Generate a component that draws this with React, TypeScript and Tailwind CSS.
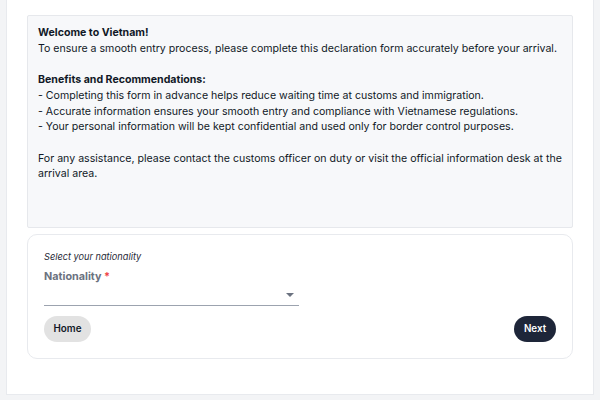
const bullets = [
  "- Completing this form in advance helps reduce waiting time at customs and immigration.",
  "- Accurate information ensures your smooth entry and compliance with Vietnamese regulations.",
  "- Your personal information will be kept confidential and used only for border control purposes.",
];

export default function App() {
  return (
    <div
      className="h-[400px] w-[600px] bg-[#f3f4f6] px-[6px] text-[#1f2937]"
      style={{ fontFamily: "Inter, 'Noto Sans', sans-serif" }}
    >
      <div className="h-[395px] border-x border-b border-[#e8eaee] bg-white px-5 pt-[15px]">
        <section className="h-[213px] rounded-[2px] border border-[#e6e8ec] bg-[#f7f8fa] px-[10px] pt-[9px] text-[10.6px] leading-[15.7px] text-[#111827]">
          <p className="font-bold">Welcome to Vietnam!</p>
          <p>
            To ensure a smooth entry process, please complete this declaration form accurately
            before your arrival.
          </p>
          <p className="mt-[15.7px] font-bold">Benefits and Recommendations:</p>
          {bullets.map((b) => (
            <p key={b}>{b}</p>
          ))}
          <p className="mt-[15.7px]">
            For any assistance, please contact the customs officer on duty or visit the official
            information desk at the arrival area.
          </p>
        </section>

        <form className="mt-[6px] rounded-[10px] border border-[#e8eaee] bg-white px-4 pb-4 pt-[15px]">
          <p className="text-[9.2px] italic leading-[13px] text-[#1f2937]">
            Select your nationality
          </p>
          <label className="mt-[7px] block text-[10.8px] font-bold leading-[14px] text-[#6b7280]">
            Nationality <span className="text-[#ef4444]">*</span>
          </label>
          <div className="flex h-[22px] w-[255px] items-center justify-end border-b border-[#9ca3af] pr-[5px]">
            <svg width="8" height="4" viewBox="0 0 8 4">
              <path d="M0 0h8L4 4z" fill="#6b7280" />
            </svg>
          </div>
          <div className="mt-[10px] flex items-center justify-between">
            <button
              type="button"
              className="h-[26px] w-[47px] rounded-full bg-[#e2e2e2] text-[9.8px] font-semibold text-[#111827]"
            >
              Home
            </button>
            <button
              type="submit"
              className="h-[26px] w-[42px] rounded-full bg-[#1e2639] text-[9.8px] font-semibold text-white"
            >
              Next
            </button>
          </div>
        </form>
      </div>
    </div>
  );
}
